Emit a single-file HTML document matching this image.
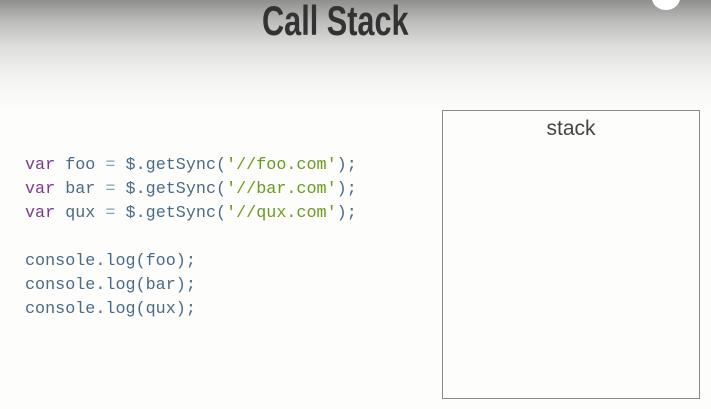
<!DOCTYPE html>
<html><head><meta charset="utf-8"><style>
html,body{margin:0;padding:0}
body{width:711px;height:409px;overflow:hidden;position:relative;background:#fdfefb;font-family:"Liberation Sans",sans-serif}
.grad{position:absolute;left:0;top:0;width:711px;height:110px;background:linear-gradient(#8f908e 0px,#bdbebb 22px,#dcdddb 45px,#f2f3f0 75px,#fdfefb 110px)}
.title{position:absolute;left:262px;top:-3px;font-size:42px;font-weight:bold;color:#333;white-space:nowrap;transform:scaleX(0.73);transform-origin:left top}
.circle{position:absolute;left:652px;top:-14px;width:28px;height:24px;border-radius:50%;background:#fff}
.code{position:absolute;left:25px;top:154px;font-family:"Liberation Mono",monospace;font-size:16.75px;line-height:24px;color:#4b6a87;white-space:pre}
.k{color:#7b3a8c}.s{color:#6a9a1e}.o{color:#7aa}
.box{position:absolute;left:442px;top:110px;width:256px;height:287px;border:1px solid #8a8a8a;background:#fdfefb}
.lbl{position:absolute;left:0;right:0;top:6px;text-align:center;font-size:21px;color:#444}
</style></head><body>
<div class="grad"></div>
<div class="circle"></div>
<div class="title">Call Stack</div>
<div class="code"><span class="k">var</span> foo <span class="o">=</span> $.getSync(<span class="s">'//foo.com'</span>);
<span class="k">var</span> bar <span class="o">=</span> $.getSync(<span class="s">'//bar.com'</span>);
<span class="k">var</span> qux <span class="o">=</span> $.getSync(<span class="s">'//qux.com'</span>);

console.log(foo);
console.log(bar);
console.log(qux);</div>
<div class="box"><div class="lbl">stack</div></div>
</body></html>
